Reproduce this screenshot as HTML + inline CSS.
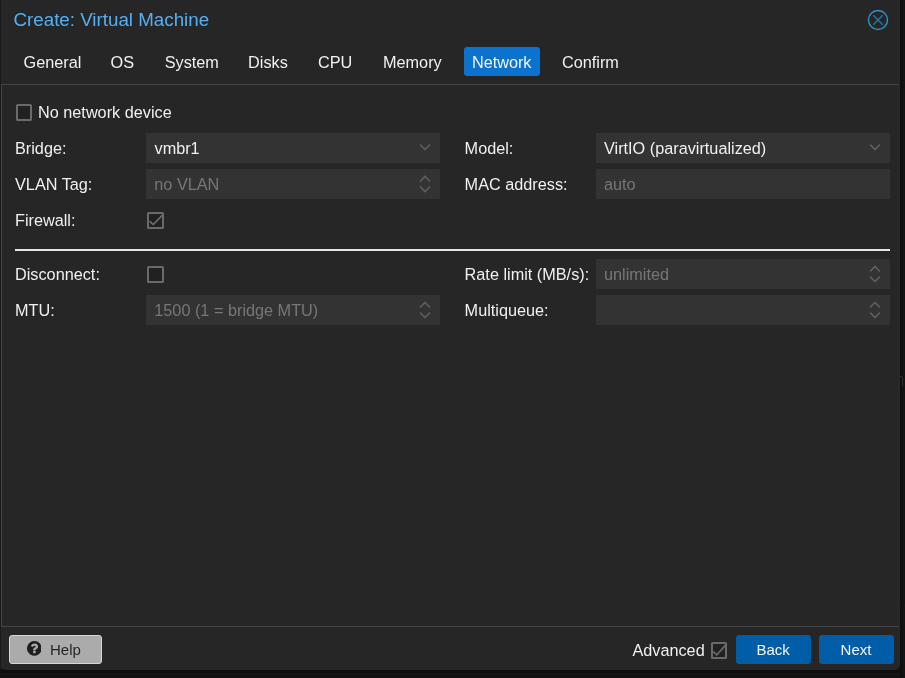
<!DOCTYPE html>
<html><head><meta charset="utf-8">
<style>
html,body{margin:0;padding:0;}
body{width:905px;height:678px;position:relative;overflow:hidden;background:#121212;font-family:"Liberation Sans",sans-serif;}
.abs{position:absolute;}
.win{position:absolute;left:0;top:-10px;width:900px;height:680.4px;background:#262626;border-radius:0 0 6px 6px;}
.edge{position:absolute;left:0;top:0;width:1px;height:670px;background:#1b1b1b;}
.t{position:absolute;white-space:pre;font-size:16.25px;line-height:20px;color:#f0f0f0;}
.title{position:absolute;left:13.5px;top:9px;font-size:18.75px;line-height:22px;color:#57aff0;white-space:pre;}
.tabtxt{top:52px;color:#f0f0f0;}
.tabact{position:absolute;left:464px;top:47px;width:76px;height:29px;background:#0b72cd;border-radius:3px;}
.line{position:absolute;background:#444;}
.field{position:absolute;height:30px;background:#333;}
.ft{position:absolute;white-space:pre;font-size:16.25px;line-height:20px;color:#f0f0f0;}
.dis{color:#777;}
.cb{position:absolute;width:13px;height:13px;border:2px solid #6b6b6b;background:#212121;}
.btn{position:absolute;top:635px;height:29px;border-radius:3px;}
</style></head><body>
<div id="root" style="position:absolute;left:0;top:0;width:905px;height:678px;will-change:transform;">
<div class="abs" style="left:0;top:670px;width:905px;height:3px;background:#0e0e0e"></div>
<div class="abs" style="left:0;top:673px;width:905px;height:2px;background:#161616"></div>
<div class="abs" style="left:900px;top:0;width:5px;height:678px;background:#131313"></div>
<div class="abs" style="left:900px;top:0;width:2px;height:678px;background:#0e0e0e"></div>
<div class="abs" style="left:902px;top:605px;width:3px;height:1px;background:#191919"></div>
<div class="win"></div>
<div class="abs" style="left:900px;top:376px;width:2px;height:8.5px;border-top:1px solid #29313a;border-right:1.6px solid #2b3138;border-radius:0 2px 0 0"></div>
<div class="edge"></div>
<div class="abs" style="left:898px;top:0;width:2px;height:664px;background:#292929"></div>
<div class="title">Create: Virtual Machine</div>
<svg class="abs" style="left:866px;top:8px" width="24" height="24" viewBox="0 0 24 24">
  <circle cx="12" cy="12" r="9.5" fill="none" stroke="#2c94cb" stroke-width="1.4"/>
  <path d="M7.3 7.3L16.7 16.7M16.7 7.3L7.3 16.7" stroke="#207db0" stroke-width="1.25" fill="none"/>
</svg>

<div class="tabact"></div>
<div class="t tabtxt" style="left:23.5px">General</div>
<div class="t tabtxt" style="left:110.6px">OS</div>
<div class="t tabtxt" style="left:164.7px">System</div>
<div class="t tabtxt" style="left:248.1px">Disks</div>
<div class="t tabtxt" style="left:318px">CPU</div>
<div class="t tabtxt" style="left:383px">Memory</div>
<div class="t tabtxt" style="left:471.9px;color:#f5f5f5">Network</div>
<div class="t tabtxt" style="left:562px">Confirm</div>

<!-- panel borders -->
<div class="line" style="left:1px;top:84px;width:898px;height:1px"></div>
<div class="line" style="left:1px;top:84px;width:1px;height:543px"></div>
<div class="line" style="left:1px;top:626px;width:898px;height:1px"></div>

<!-- No network device -->
<svg class="abs" style="left:16px;top:104px" width="16" height="17"><rect x="1" y="1" width="14" height="15" rx="0.6" fill="#212121" stroke="#6a6a6a" stroke-width="2"/></svg>
<div class="t" style="left:38px;top:102px">No network device</div>

<!-- left column -->
<div class="t" style="left:15px;top:138px">Bridge:</div>
<div class="field" style="left:146px;top:133px;width:294px"></div>
<div class="ft" style="left:154.5px;top:138px">vmbr1</div>

<div class="t" style="left:15px;top:174px">VLAN Tag:</div>
<div class="field" style="left:146px;top:169px;width:294px"></div>
<div class="ft dis" style="left:154.3px;top:174px">no VLAN</div>

<div class="t" style="left:15px;top:210px">Firewall:</div>
<svg class="abs" style="left:147px;top:212px" width="17" height="17"><rect x="1" y="1" width="15" height="15" rx="0.6" fill="#212121" stroke="#6a6a6a" stroke-width="2"/><path d="M2.6 9.1 L6.2 12.6 L15.9 2.6" stroke="#6c6c6c" stroke-width="1.6" fill="none"/></svg>

<div class="abs" style="left:15px;top:249px;width:875px;height:2px;background:#e8e8e8"></div>

<div class="t" style="left:15px;top:264px">Disconnect:</div>
<svg class="abs" style="left:147px;top:266px" width="17" height="17"><rect x="1" y="1" width="15" height="15" rx="0.6" fill="#212121" stroke="#6a6a6a" stroke-width="2"/></svg>

<div class="t" style="left:15px;top:300px">MTU:</div>
<div class="field" style="left:146px;top:295px;width:294px"></div>
<div class="ft dis" style="left:154.3px;top:300px">1500 (1 = bridge MTU)</div>

<!-- right column -->
<div class="t" style="left:464.6px;top:138px">Model:</div>
<div class="field" style="left:596px;top:133px;width:294px"></div>
<div class="ft" style="left:604px;top:138px">VirtIO (paravirtualized)</div>

<div class="t" style="left:464.6px;top:174px">MAC address:</div>
<div class="field" style="left:596px;top:169px;width:294px"></div>
<div class="ft dis" style="left:604px;top:174px">auto</div>

<div class="t" style="left:464.6px;top:264px">Rate limit (MB/s):</div>
<div class="field" style="left:596px;top:259px;width:294px"></div>
<div class="ft dis" style="left:604px;top:264px">unlimited</div>

<div class="t" style="left:464.6px;top:300px">Multiqueue:</div>
<div class="field" style="left:596px;top:295px;width:294px"></div>


<!-- triggers -->
<svg class="abs" style="left:416px;top:133px" width="20" height="30"><path d="M4.5 12L9 16.5L13.5 12" stroke="#5e5e5e" stroke-width="1.7" fill="none" stroke-linecap="round"/></svg>
<svg class="abs" style="left:416px;top:169px" width="20" height="30"><path d="M4.5 12L9 7.5L13.5 12M4.5 18L9 22.5L13.5 18" stroke="#5e5e5e" stroke-width="1.7" fill="none" stroke-linecap="round"/></svg>
<svg class="abs" style="left:416px;top:295px" width="20" height="30"><path d="M4.5 12L9 7.5L13.5 12M4.5 18L9 22.5L13.5 18" stroke="#5e5e5e" stroke-width="1.7" fill="none" stroke-linecap="round"/></svg>
<svg class="abs" style="left:866px;top:133px" width="20" height="30"><path d="M4.5 12L9 16.5L13.5 12" stroke="#5e5e5e" stroke-width="1.7" fill="none" stroke-linecap="round"/></svg>
<svg class="abs" style="left:866px;top:259px" width="20" height="30"><path d="M4.5 12L9 7.5L13.5 12M4.5 18L9 22.5L13.5 18" stroke="#5e5e5e" stroke-width="1.7" fill="none" stroke-linecap="round"/></svg>
<svg class="abs" style="left:866px;top:295px" width="20" height="30"><path d="M4.5 12L9 7.5L13.5 12M4.5 18L9 22.5L13.5 18" stroke="#5e5e5e" stroke-width="1.7" fill="none" stroke-linecap="round"/></svg>
<!-- footer -->
<div class="btn" style="left:9px;width:91px;height:27px;background:#ababab;border:1px solid #d6d6d6;"></div>
<svg class="abs" style="left:26.6px;top:641.1px" width="14.8" height="14.8" viewBox="0 0 1536 1536"><path fill="#1f1f1f" fill-rule="evenodd" d="M896 1248v-192q0-14-9-23t-23-9h-192q-14 0-23 9t-9 23v192q0 14 9 23t23 9h192q14 0 23-9t9-23zm256-672q0-88-55.5-163t-138.5-116-170-41q-243 0-371 213-15 24 8 42l132 100q7 6 19 6 16 0 25-12 53-68 86-92 34-24 86-24 48 0 85.5 26t37.5 59q0 38-20 61t-68 45q-63 28-115.5 86.5t-52.5 125.5v36q0 14 9 23t23 9h192q14 0 23-9t9-23q0-19 21.5-49.5t54.5-49.5q32-18 49-28.5t46-35 44.5-48 28-60.5 12.5-81zm384 192q0 209-103 385.5t-279.5 279.5-385.5 103-385.5-103-279.5-279.5-103-385.5 103-385.5 279.5-279.5 385.5-103 385.5 103 279.5 279.5 103 385.5z"/></svg>
<div class="t" style="left:50px;top:640px;font-size:15px;color:#252525">Help</div>
<div class="t" style="left:632.4px;top:640px">Advanced</div>
<svg class="abs" style="left:711px;top:642px" width="16" height="17"><rect x="1" y="1" width="14" height="15" rx="0.6" fill="#212121" stroke="#6a6a6a" stroke-width="2"/><path d="M2.3 9.6 L5.8 12.8 L15.3 2.4" stroke="#6c6c6c" stroke-width="1.6" fill="none"/></svg>
<div class="btn" style="left:736px;width:75px;background:#005ea8"></div>
<div class="t" style="left:756.5px;top:640px;font-size:15px;color:#f5f5f5">Back</div>
<div class="btn" style="left:819px;width:75px;background:#005ea8"></div>
<div class="t" style="left:840.6px;top:640px;font-size:15px;color:#f5f5f5">Next</div>
</div>
</body></html>
